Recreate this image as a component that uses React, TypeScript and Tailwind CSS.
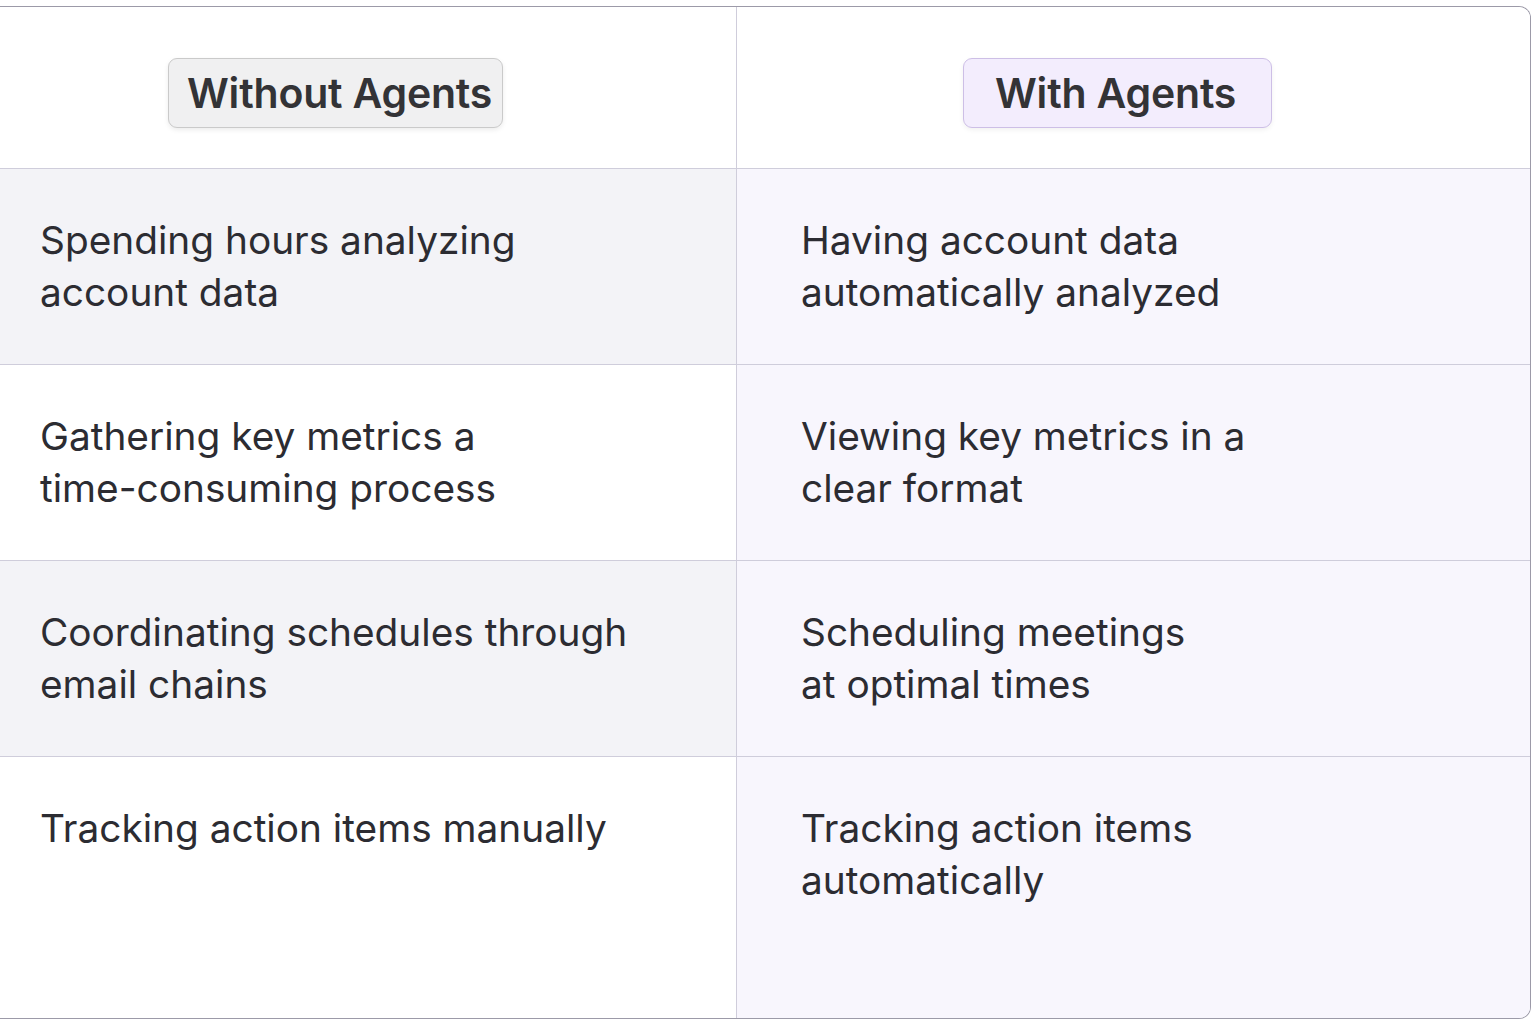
const rows: { without: string[]; withA: string[] }[] = [
  {
    without: ['Spending hours analyzing', 'account data'],
    withA: ['Having account data', 'automatically analyzed'],
  },
  {
    without: ['Gathering key metrics a', 'time-consuming process'],
    withA: ['Viewing key metrics in a', 'clear format'],
  },
  {
    without: ['Coordinating schedules through', 'email chains'],
    withA: ['Scheduling meetings', 'at optimal times'],
  },
  {
    without: ['Tracking action items manually'],
    withA: ['Tracking action items', 'automatically'],
  },
];

function Lines({ lines }: { lines: string[] }) {
  return (
    <p className="text-[38.8px] leading-[52px] text-[#2c2c32]">
      {lines.map((l, i) => (
        <span key={i} className="block whitespace-nowrap">
          {l}
        </span>
      ))}
    </p>
  );
}

export default function App() {
  return (
    <div
      className="w-[1536px] h-[1024px] bg-white pt-[6px] overflow-hidden"
      style={{ fontFamily: 'Inter, "Noto Sans", sans-serif' }}
    >
      <div className="w-[1531px] h-[1013px] border-t-[1.5px] border-r-[1.5px] border-b-[1.5px] border-[#9c9aa8] rounded-tr-[12px] rounded-br-[12px] overflow-hidden grid grid-cols-[737px_1fr] grid-rows-[162px_196px_196px_196px_1fr]">
        {/* header */}
        <div className="bg-white border-b border-r border-[#cfcddb] pl-[168px] pt-[51px]">
          <span className="inline-flex items-center w-[335px] h-[70px] pl-[18px] pt-[2px] rounded-[9px] border-[1.5px] border-[#cacaca] bg-[#f0f0f1] shadow-[0_2px_5px_rgba(0,0,0,0.08)] text-[41px] font-semibold text-[#333336] tracking-[-0.2px] whitespace-nowrap">
            Without Agents
          </span>
        </div>
        <div className="bg-white border-b border-[#cfcddb] pl-[226px] pt-[51px]">
          <span className="inline-flex items-center w-[309px] h-[70px] pl-[31px] pt-[2px] rounded-[9px] border-[1.5px] border-[#cdbfe6] bg-[#f3edfd] shadow-[0_2px_5px_rgba(0,0,0,0.06)] text-[41px] font-semibold text-[#333336] tracking-[-0.2px] whitespace-nowrap">
            With Agents
          </span>
        </div>

        {rows.map((r, i) => {
          const last = i === rows.length - 1;
          return [
            <div
              key={'l' + i}
              className={
                'border-r border-[#cfcddb] pl-[40px] pt-[45px] ' +
                (last ? '' : 'border-b ') +
                (i % 2 === 0 ? 'bg-[#f3f3f7]' : 'bg-white')
              }
            >
              <Lines lines={r.without} />
            </div>,
            <div
              key={'r' + i}
              className={
                'pl-[64px] pt-[45px] bg-[#f8f6fd] ' +
                (last ? '' : 'border-b border-[#cfcddb]')
              }
            >
              <Lines lines={r.withA} />
            </div>,
          ];
        })}
      </div>
    </div>
  );
}
